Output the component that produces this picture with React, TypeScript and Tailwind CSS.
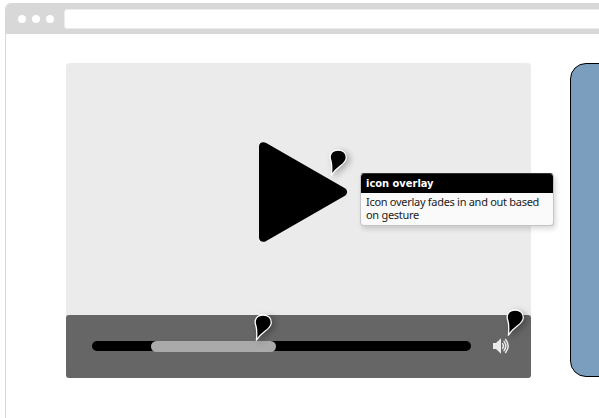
import React from "react";

function Marker({ className }: { className: string }) {
  return (
    <svg
      className={`absolute h-[32px] w-[28px] overflow-visible drop-shadow-[3px_2px_3px_rgba(0,0,0,0.28)] ${className}`}
      viewBox="0 0 28 32"
    >
      <path
        d="M5.4 28.2C6.1 21.5 6 17.5 4.9 13.8C2.6 7.5 6 3.1 12 3C17.6 2.9 20.7 6.8 20.2 11.2C19.3 18.2 11 18.6 5.4 28.2Z"
        fill="#000"
        stroke="#fff"
        strokeWidth="1.3"
        strokeLinejoin="round"
      />
    </svg>
  );
}

function Speaker() {
  return (
    <svg className="h-[18px] w-[18px] shrink-0" viewBox="0 0 18 18">
      <path d="M1 6H4L9 1.3V16.7L4 12H1Z" fill="#ebebeb" />
      <g fill="none" stroke="#ebebeb" strokeWidth="1.5" strokeLinecap="round">
        <path d="M10.6 6.6Q12.4 9 10.6 11.4" />
        <path d="M12 4.4Q15.6 9 12 13.6" />
        <path d="M13.6 2.5Q18.8 9 13.6 15.5" />
      </g>
    </svg>
  );
}

function Tooltip() {
  return (
    <div className="absolute left-[294px] top-[110px] h-[53px] w-[194px] overflow-hidden rounded-[4px] border border-[#c4c4c4] border-t-[#333] bg-[#fafafa] font-['Noto_Sans',sans-serif] text-[11px] leading-[13px] text-[#222] shadow-[2px_3px_5px_rgba(0,0,0,0.15)]">
      <div className="h-[19px] bg-black pl-[5px] pt-[3px] font-['DejaVu_Sans_Condensed','DejaVu_Sans',sans-serif] text-[11px] font-bold text-white">
        icon overlay
      </div>
      <div className="pl-[5px] pt-[2px] tracking-[-0.29px]">
        <p className="whitespace-nowrap">Icon overlay fades in and out based</p>
        <p className="whitespace-nowrap">on gesture</p>
      </div>
    </div>
  );
}

function Player() {
  return (
    <div className="relative flex h-[315px] w-[465px] shrink-0 flex-col rounded-[4px] bg-[#ebebeb]">
      <div className="h-[252px] pl-[193px] pt-[78px]">
        <svg className="h-[102px] w-[90px]" viewBox="0 0 90 102">
          <path
            d="M0 5.5C0 1.5 4 .1 7.2 2L85.5 47C89 49 89 53 85.5 55L7.2 100C4 101.9 0 100.5 0 96.5Z"
            fill="#000"
          />
        </svg>
      </div>
      <div className="flex h-[63px] items-center rounded-[3px] bg-[#666] pb-[2px] pl-[26px]">
        <div className="flex h-[10px] w-[379px] rounded-full bg-black pl-[59px]">
          <div className="h-[11px] w-[125px] rounded-full bg-[#aaa]" />
        </div>
        <div className="ml-[21px]">
          <Speaker />
        </div>
      </div>
      <Marker className="left-[260px] top-[84px]" />
      <Marker className="left-[185px] top-[249px]" />
      <Marker className="left-[437px] top-[244px]" />
      <Tooltip />
    </div>
  );
}

export default function App() {
  return (
    <div className="h-[418px] w-[599px] overflow-hidden bg-white pl-[5px] pt-[3px]">
      <div className="h-[415px] w-[700px] overflow-hidden rounded-tl-[6px] border-l border-[#d8d8d8]">
        <div className="flex h-[31px] items-center bg-[#d8d8d8] pl-[11.5px]">
          <div className="flex gap-[6.2px]">
            <span className="size-[8px] rounded-full bg-white" />
            <span className="size-[8px] rounded-full bg-white" />
            <span className="size-[8px] rounded-full bg-white" />
          </div>
          <div className="ml-[10.1px] h-[20px] flex-1 rounded-[3px] border border-[#ececec] bg-white" />
        </div>
        <div className="flex gap-[39px] pl-[60px] pt-[29px]">
          <Player />
          <div className="h-[314px] w-[150px] shrink-0 rounded-[16px] border border-black bg-[#7b9ebf]" />
        </div>
      </div>
    </div>
  );
}
